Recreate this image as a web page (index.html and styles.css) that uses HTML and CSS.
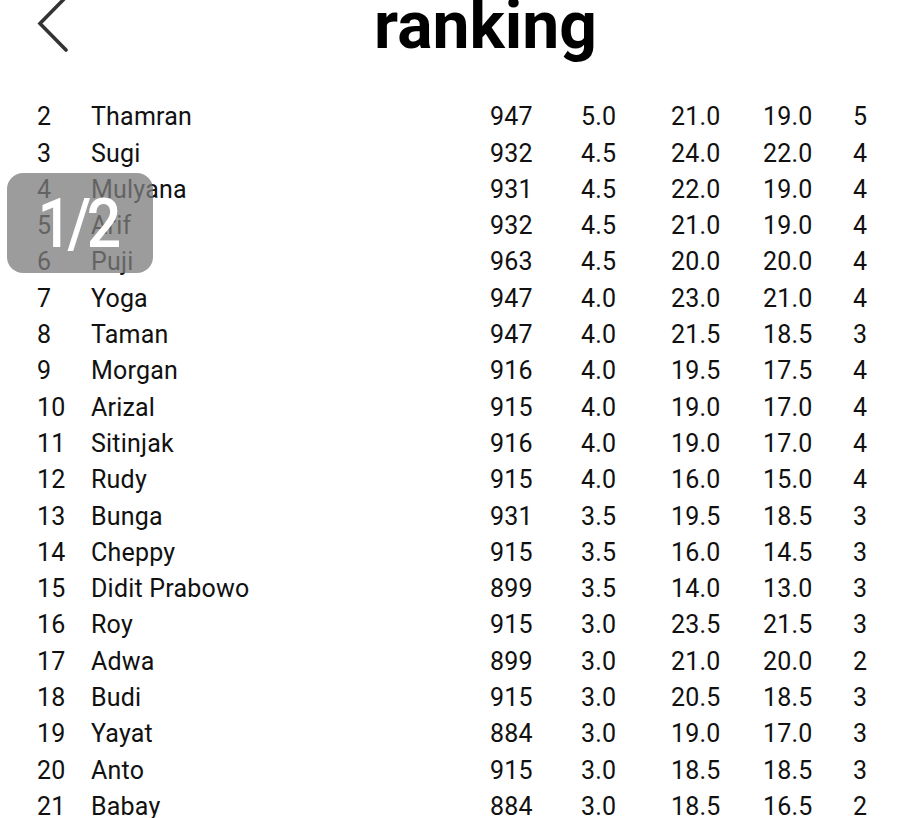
FILE: index.html
```html
<!DOCTYPE html>
<html lang="id">
<head>
<meta charset="utf-8">
<title>ranking</title>
<link rel="stylesheet" href="styles.css">
</head>
<body>
<header class="topbar">
  <div class="back">
    <svg class="back-icon" width="50" height="52" viewBox="0 0 50 52" aria-hidden="true">
      <polyline points="66,-3 40,23.5 66,50" fill="none" stroke="#333" stroke-width="3.6" stroke-linecap="round" stroke-linejoin="miter"/>
    </svg>
  </div>
  <h1 class="title">ranking</h1>
</header>
<main class="list">
  <div class="row"><span>2</span><span>Thamran</span><span>947</span><span>5.0</span><span>21.0</span><span>19.0</span><span>5</span></div>
  <div class="row"><span>3</span><span>Sugi</span><span>932</span><span>4.5</span><span>24.0</span><span>22.0</span><span>4</span></div>
  <div class="row"><span>4</span><span>Mulyana</span><span>931</span><span>4.5</span><span>22.0</span><span>19.0</span><span>4</span></div>
  <div class="row"><span>5</span><span>Arif</span><span>932</span><span>4.5</span><span>21.0</span><span>19.0</span><span>4</span></div>
  <div class="row"><span>6</span><span>Puji</span><span>963</span><span>4.5</span><span>20.0</span><span>20.0</span><span>4</span></div>
  <div class="row"><span>7</span><span>Yoga</span><span>947</span><span>4.0</span><span>23.0</span><span>21.0</span><span>4</span></div>
  <div class="row"><span>8</span><span>Taman</span><span>947</span><span>4.0</span><span>21.5</span><span>18.5</span><span>3</span></div>
  <div class="row"><span>9</span><span>Morgan</span><span>916</span><span>4.0</span><span>19.5</span><span>17.5</span><span>4</span></div>
  <div class="row"><span>10</span><span>Arizal</span><span>915</span><span>4.0</span><span>19.0</span><span>17.0</span><span>4</span></div>
  <div class="row"><span>11</span><span>Sitinjak</span><span>916</span><span>4.0</span><span>19.0</span><span>17.0</span><span>4</span></div>
  <div class="row"><span>12</span><span>Rudy</span><span>915</span><span>4.0</span><span>16.0</span><span>15.0</span><span>4</span></div>
  <div class="row"><span>13</span><span>Bunga</span><span>931</span><span>3.5</span><span>19.5</span><span>18.5</span><span>3</span></div>
  <div class="row"><span>14</span><span>Cheppy</span><span>915</span><span>3.5</span><span>16.0</span><span>14.5</span><span>3</span></div>
  <div class="row"><span>15</span><span>Didit Prabowo</span><span>899</span><span>3.5</span><span>14.0</span><span>13.0</span><span>3</span></div>
  <div class="row"><span>16</span><span>Roy</span><span>915</span><span>3.0</span><span>23.5</span><span>21.5</span><span>3</span></div>
  <div class="row"><span>17</span><span>Adwa</span><span>899</span><span>3.0</span><span>21.0</span><span>20.0</span><span>2</span></div>
  <div class="row"><span>18</span><span>Budi</span><span>915</span><span>3.0</span><span>20.5</span><span>18.5</span><span>3</span></div>
  <div class="row"><span>19</span><span>Yayat</span><span>884</span><span>3.0</span><span>19.0</span><span>17.0</span><span>3</span></div>
  <div class="row"><span>20</span><span>Anto</span><span>915</span><span>3.0</span><span>18.5</span><span>18.5</span><span>3</span></div>
  <div class="row"><span>21</span><span>Babay</span><span>884</span><span>3.0</span><span>18.5</span><span>16.5</span><span>2</span></div>
</main>
<div class="page-badge"><span class="page-badge-text">1/2</span></div>
</body>
</html>
```
FILE: styles.css
```css
html, body {
  margin: 0;
  padding: 0;
  background: #ffffff;
}
body {
  font-family: Roboto, "Noto Sans", "Liberation Sans", sans-serif;
  color: #111111;
  overflow: hidden;
  height: 818px;
}
.topbar {
  display: flex;
  align-items: flex-start;
  height: 99.3px;
}
.back {
  width: 50px;
  flex: 0 0 50px;
}
.back-icon {
  display: block;
  overflow: visible;
}
.title {
  flex: 1;
  margin: -7.3px 0 0 0;
  text-align: center;
  font-size: 66px;
  line-height: 66px;
  font-weight: 700;
  color: #000000;
}
.list {
  padding-left: 37px;
}
.row {
  display: grid;
  grid-template-columns: 54px 399px 91px 90px 92px 90px auto;
  font-size: 25px;
  line-height: 36.3px;
  letter-spacing: 0.2px;
  white-space: nowrap;
}
.page-badge {
  position: absolute;
  left: 7px;
  top: 173px;
  width: 146px;
  height: 100px;
  border-radius: 16px;
  background: rgba(125, 125, 125, 0.76);
  color: #ffffff;
  display: flex;
  align-items: center;
  justify-content: center;
}
.page-badge-text {
  font-family: Roboto, "Noto Sans", sans-serif;
  font-size: 69px;
  font-weight: 500;
  line-height: 1;
  letter-spacing: -5px;
  margin-right: 5px;
  transform: scaleX(0.88);
}
```
